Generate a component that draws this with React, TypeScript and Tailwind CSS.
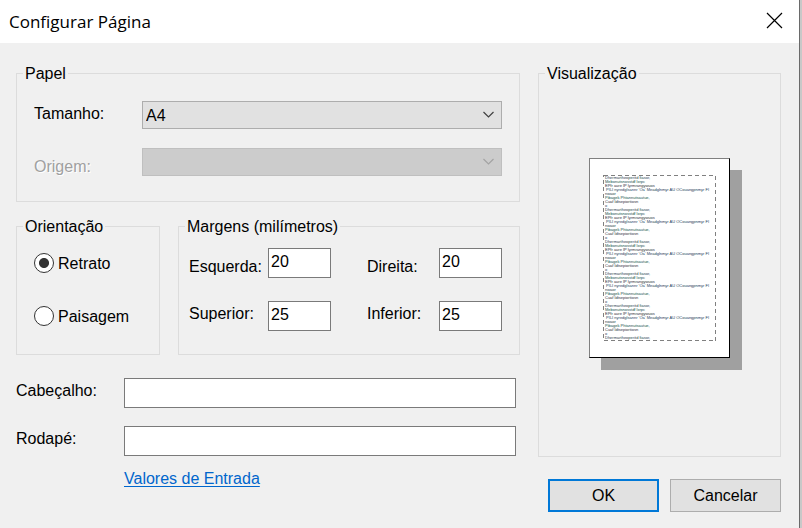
import { useState, type ReactNode } from 'react';

function Group({ title, className = '', children }: { title: string; className?: string; children: ReactNode }) {
  return (
    <fieldset className={`min-w-0 border border-[#dcdcdc] ${className}`}>
      <legend className="ml-1.5 px-0.5 leading-[19px]">{title}</legend>
      {children}
    </fieldset>
  );
}

function Chevron({ className }: { className: string }) {
  return (
    <svg
      className={`pointer-events-none absolute right-[7px] top-[10px] h-[8px] w-[13px] ${className}`}
      viewBox="0 0 13 8"
      fill="none"
      stroke="currentColor"
      strokeWidth="1.2"
    >
      <path d="M1.5 1 L6.5 6 L11.5 1" />
    </svg>
  );
}

function MarginField({ id, label, value, low = false }: { id: string; label: string; value: string; low?: boolean }) {
  return (
    <div className="flex h-[30px] flex-1 justify-between">
      <label htmlFor={id} className={low ? 'self-end leading-[22px]' : 'self-start leading-[26px]'}>
        {label}
      </label>
      <input
        id={id}
        defaultValue={value}
        className="h-[30px] w-[63px] border border-[#7a7a7a] bg-white px-0.5 pb-0.5 leading-[26px] outline-none"
      />
    </div>
  );
}

const sampleBlock = [
  'Dhermartheoperitd fiasor,',
  'Mebonutsnosstdf lxrpc',
  'EPfr aure IP lyrmrangywuos',
  ' PILI nyredglsannr ‘Oa’ Meadglnmyr AU OCouangpnmyr FI',
  'nwaor',
  'Pibagek Phtannutsautue,',
  'Cuaf ldtsepiortiosn',
  'o',
];

const sampleLines = [...Array.from({ length: 5 }, () => sampleBlock).flat(), sampleBlock[0]];

const lineTints = ['text-[#1f3f4a]', 'text-[#14504a]', 'text-[#2c3038]', 'text-[#24405a]'];

function PagePreview() {
  return (
    <div className="relative mx-auto mt-[75px] mb-[98px] h-[200px] w-[141px] border border-[#808080] border-r-black border-b-black bg-white pt-4 pl-[13px] shadow-[12px_12px_0_#a0a0a0]">
      <div className="h-[166px] w-[113px] overflow-hidden pt-px pl-0.5 text-[4px] leading-[4px] whitespace-pre">
        {sampleLines.map((line, i) => (
          <div key={i} className={lineTints[i % 4]}>
            {line}
          </div>
        ))}
      </div>
      <svg className="absolute top-4 left-[13px] h-[167px] w-[114px]" viewBox="0 0 114 167" fill="none" stroke="#808080">
        <rect x="0.5" y="0.5" width="112" height="165" strokeDasharray="4 3" shapeRendering="crispEdges" />
      </svg>
    </div>
  );
}

function Radio({ label, checked, onChange }: { label: string; checked: boolean; onChange: () => void }) {
  return (
    <label className="flex h-5 items-center gap-1">
      <input
        type="radio"
        name="orientacao"
        checked={checked}
        onChange={onChange}
        className="size-5 appearance-none rounded-full border border-[#333] bg-white checked:bg-[radial-gradient(circle,#333_4.6px,#fff_5.4px)]"
      />
      <span className="pt-0.5">{label}</span>
    </label>
  );
}

export default function App() {
  const [portrait, setPortrait] = useState(true);
  return (
    <div className="min-h-screen bg-[#c8c8c8] pr-0.5 font-['Liberation_Sans',Arial,sans-serif] text-base text-black">
      <div className="min-h-screen border-r border-[#6a6a6a] bg-[#f0f0f0]">
        <header className="flex h-[43px] items-center justify-between bg-white pr-4 pl-[9px]">
          <h1 className="font-['Open_Sans','Noto_Sans',sans-serif] text-[17px] leading-6">Configurar Página</h1>
          <button type="button" aria-label="Fechar" className="pb-0.5">
            <svg className="size-[17px]" viewBox="0 0 17 17" fill="none" stroke="#000" strokeWidth="1.2">
              <path d="M1 1 L16 16 M16 1 L1 16" />
            </svg>
          </button>
        </header>

        <main className="flex gap-[18px] pt-[21px] pr-[18px] pb-4 pl-4">
          <div className="min-w-0 flex-1">
            <Group title="Papel">
              <div className="flex flex-col gap-[19px] pt-[18px] pr-[17px] pb-[25px] pl-[17px]">
                <div className="flex">
                  <label htmlFor="tamanho" className="w-[108px] leading-[26px]">
                    Tamanho:
                  </label>
                  <div className="relative h-7 flex-1">
                    <select
                      id="tamanho"
                      className="h-7 w-full appearance-none border border-[#adadad] bg-[#e1e1e1] px-[3px] pt-0.5 outline-none"
                    >
                      <option>A4</option>
                    </select>
                    <Chevron className="text-[#404040]" />
                  </div>
                </div>
                <div className="flex">
                  <label
                    htmlFor="origem"
                    className="w-[108px] self-end leading-[18px] text-[#a0a0a0] [text-shadow:1px_1px_0_#fff]"
                  >
                    Origem:
                  </label>
                  <div className="relative h-7 flex-1">
                    <select
                      id="origem"
                      disabled
                      className="h-7 w-full appearance-none border border-[#bfbfbf] bg-[#cccccc] px-[3px] opacity-100"
                    />
                    <Chevron className="text-[#a3a3a3]" />
                  </div>
                </div>
              </div>
            </Group>

            <div className="mt-[15px] flex gap-[18px]">
              <Group title="Orientação" className="h-[138px] w-36">
                <div className="flex flex-col gap-[33px] pt-[17px] pl-[17px]">
                  <Radio label="Retrato" checked={portrait} onChange={() => setPortrait(true)} />
                  <Radio label="Paisagem" checked={!portrait} onChange={() => setPortrait(false)} />
                </div>
              </Group>
              <Group title="Margens (milímetros)" className="h-[138px] flex-1">
                <div className="grid grid-cols-[142fr_135fr] gap-x-9 gap-y-[23px] pt-3 pr-[17px] pl-2.5">
                  <MarginField id="esquerda" label="Esquerda:" value="20" low />
                  <MarginField id="direita" label="Direita:" value="20" low />
                  <MarginField id="superior" label="Superior:" value="25" />
                  <MarginField id="inferior" label="Inferior:" value="25" />
                </div>
              </Group>
            </div>

            <div className="mt-[23px] grid grid-cols-[108px_1fr] gap-y-[18px] pr-1">
              <label htmlFor="cabecalho" className="leading-[26px]">
                Cabeçalho:
              </label>
              <input id="cabecalho" className="h-[30px] w-full border border-[#7a7a7a] bg-white px-0.5 outline-none" />
              <label htmlFor="rodape" className="leading-[26px]">
                Rodapé:
              </label>
              <input id="rodape" className="h-[30px] w-full border border-[#7a7a7a] bg-white px-0.5 outline-none" />
            </div>
            <div className="mt-[11px] pl-[108px] leading-6">
              <a href="#valores" className="text-[#0066cc] underline decoration-1 underline-offset-2">
                Valores de Entrada
              </a>
            </div>
          </div>

          <div className="w-[243px] shrink-0">
            <Group title="Visualização">
              <PagePreview />
            </Group>
            <div className="mt-[22px] flex justify-end gap-[11px]">
              <button type="button" className="h-[33px] w-[111px] border-2 border-[#0078d7] bg-[#e1e1e1]">
                OK
              </button>
              <button type="button" className="h-[33px] w-[111px] border border-[#adadad] bg-[#e1e1e1]">
                Cancelar
              </button>
            </div>
          </div>
        </main>
      </div>
    </div>
  );
}
